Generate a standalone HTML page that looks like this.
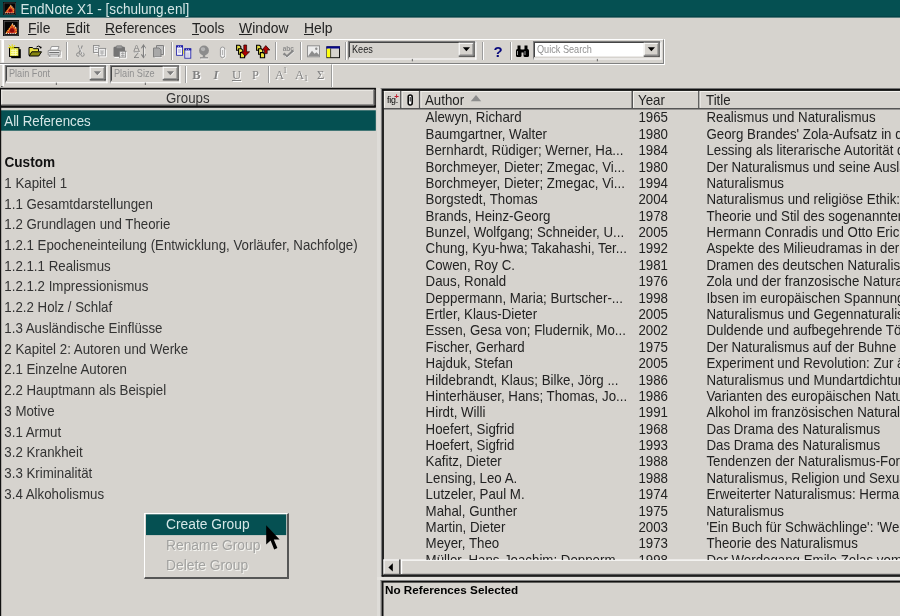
<!DOCTYPE html>
<html><head><meta charset="utf-8"><title>EndNote X1 - [schulung.enl]</title>
<style>
html,body{margin:0;padding:0}
body{width:900px;height:616px;overflow:hidden;background:#d6d3ce;font-family:"Liberation Sans",sans-serif;color:#222;position:relative;font-size:13.3px}
.a{position:absolute;white-space:pre;line-height:1;filter:blur(0.35px)}
.box{position:absolute;box-sizing:border-box}
u{text-decoration:underline;text-underline-offset:1px}
.g{left:4.3px;font-size:13.3px;color:#333}
.s{transform:scaleY(1.065);transform-origin:0 85%}
.r{font-size:13.3px;color:#222}
</style></head><body>

<div class="box" style="left:0;top:0;width:900px;height:17px;background:#055052"></div>
<svg class="box" style="left:0;top:16px" width="900" height="2"><rect x="0" y="0" width="900" height="1.6" fill="#044448"/></svg>
<div class="a s" style="left:20.5px;top:3px;font-size:13.55px;color:#d4e6e6">EndNote X1 - [schulung.enl]</div>
<svg class="box" style="left:2.7px;top:2px" width="13.3" height="13.3" viewBox="0 0 16 16"><rect width="16" height="16" fill="#050505"/><rect x="1.2" y="1.2" width="13.6" height="13.6" fill="none" stroke="#5a5a5a" stroke-width="0.8"/><path d="M2.2 13.2 L9 3.6 L13.6 8.6 L13.6 13.2 Z" fill="#d43a20"/><path d="M3.4 12.6 L9 5 L12.8 9 L12.8 12.6" fill="none" stroke="#f4c830" stroke-width="1.3" stroke-dasharray="1.1 1.1"/><path d="M2.6 13.2 H13.4" stroke="#f0e8e0" stroke-width="1" stroke-dasharray="1.2 1"/><path d="M9 3.4 L13.6 8.4" stroke="#f8e8d8" stroke-width="1" stroke-dasharray="1.3 0.9"/><circle cx="8.8" cy="10.2" r="2.1" fill="#8a0808"/></svg>
<svg class="box" style="left:2.7px;top:19.8px" width="16.4" height="16.4" viewBox="0 0 16 16"><rect width="16" height="16" fill="#050505"/><rect x="1.2" y="1.2" width="13.6" height="13.6" fill="none" stroke="#5a5a5a" stroke-width="0.8"/><path d="M2.2 13.2 L9 3.6 L13.6 8.6 L13.6 13.2 Z" fill="#d43a20"/><path d="M3.4 12.6 L9 5 L12.8 9 L12.8 12.6" fill="none" stroke="#f4c830" stroke-width="1.3" stroke-dasharray="1.1 1.1"/><path d="M2.6 13.2 H13.4" stroke="#f0e8e0" stroke-width="1" stroke-dasharray="1.2 1"/><path d="M9 3.4 L13.6 8.4" stroke="#f8e8d8" stroke-width="1" stroke-dasharray="1.3 0.9"/><circle cx="8.8" cy="10.2" r="2.1" fill="#8a0808"/></svg>
<div class="a" style="left:28px;top:22px;font-size:13.9px;color:#222"><u>F</u>ile</div>
<div class="a" style="left:66px;top:22px;font-size:13.9px;color:#222"><u>E</u>dit</div>
<div class="a" style="left:105px;top:22px;font-size:13.9px;color:#222"><u>R</u>eferences</div>
<div class="a" style="left:192px;top:22px;font-size:13.9px;color:#222"><u>T</u>ools</div>
<div class="a" style="left:239px;top:22px;font-size:13.9px;color:#222"><u>W</u>indow</div>
<div class="a" style="left:304px;top:22px;font-size:13.9px;color:#222"><u>H</u>elp</div>
<svg class="box" style="left:0;top:109px" width="378" height="24"><rect x="1" y="1.3" width="374.8" height="20.4" fill="#055052"/></svg>
<svg class="box" style="left:0;top:0" width="900" height="616" viewBox="0 0 900 616"><rect x="0" y="88" width="1.2" height="528" fill="#111"/><rect x="0" y="87.8" width="375.8" height="1.9" fill="#111"/><rect x="0" y="105.3" width="375.8" height="2.5" fill="#111"/><rect x="374.3" y="88" width="1.5" height="19" fill="#111"/><rect x="1.2" y="89.7" width="373" height="1" fill="#f0eeea"/><rect x="1.2" y="104.3" width="373" height="1" fill="#777"/><rect x="373.2" y="89.7" width="1.1" height="15" fill="#777"/><rect x="1.2" y="89.7" width="1" height="14.6" fill="#f0eeea"/><rect x="377" y="88" width="3" height="528" fill="#dedcd8"/><rect x="381" y="88" width="1.1" height="488.5" fill="#808080"/><rect x="382.1" y="89" width="1.8" height="487.5" fill="#111"/><rect x="380.6" y="88" width="520" height="1" fill="#808080"/><rect x="382.1" y="88.9" width="520" height="2" fill="#111"/><rect x="381.7" y="575" width="520" height="1.8" fill="#111"/><rect x="383.9" y="91" width="517" height="1" fill="#f4f2ee"/><rect x="383.9" y="108" width="517" height="1.5" fill="#555"/><rect x="383.9" y="91" width="1" height="16.8" fill="#f4f2ee"/><rect x="400.1" y="91" width="1.5" height="17.5" fill="#555"/><rect x="401.6" y="91" width="1" height="16.8" fill="#f4f2ee"/><rect x="418.9" y="91" width="1.5" height="17.5" fill="#555"/><rect x="420.4" y="91" width="1" height="16.8" fill="#f4f2ee"/><rect x="631.5" y="91" width="1.5" height="17.5" fill="#555"/><rect x="633" y="91" width="1" height="16.8" fill="#f4f2ee"/><rect x="698.1" y="91" width="1.5" height="17.5" fill="#555"/><rect x="699.6" y="91" width="1" height="16.8" fill="#f4f2ee"/><rect x="903.5" y="91" width="1.5" height="17.5" fill="#555"/><rect x="383.5" y="559.5" width="517" height="15.5" fill="#d6d3ce"/><rect x="383.5" y="559.5" width="16" height="1" fill="#fff"/><rect x="383.5" y="559.5" width="1" height="15" fill="#fff"/><rect x="399" y="559.5" width="1.5" height="15.5" fill="#555"/><rect x="383.5" y="573.8" width="517" height="1.4" fill="#555"/><rect x="401" y="559.5" width="500" height="1.2" fill="#fff"/><rect x="401" y="559.5" width="1.2" height="14.5" fill="#fff"/><path d="M392.8 563.2V571.6L388.4 567.4Z" fill="#000"/><rect x="377" y="577" width="524" height="3" fill="#e4e2de"/><rect x="380.6" y="580" width="520" height="1" fill="#808080"/><rect x="380.6" y="580" width="1.1" height="40" fill="#808080"/><rect x="381.7" y="581" width="520" height="1.6" fill="#111"/><rect x="381.7" y="581" width="1.8" height="40" fill="#111"/><path d="M470.8 101.2L476 95L481.2 101.2Z" fill="#8c8c8c"/><rect x="408.2" y="95" width="4" height="10" rx="2" fill="#fff" stroke="#0a0a0a" stroke-width="1.6"/><path d="M410.2 97V101.5" stroke="#111" stroke-width="1"/></svg>
<div class="a s" style="left:166px;top:91.5px;font-size:13.3px;color:#333">Groups</div>
<div class="a s" style="left:4.3px;top:114.5px;font-size:13.3px;color:#d4e6e6">All References</div>
<div class="a s" style="left:4.5px;top:156px;font-size:13.6px;font-weight:bold;color:#111">Custom</div>
<div class="a g s" style="top:176.80px">1 Kapitel 1</div>
<div class="a g s" style="top:197.53px">1.1 Gesamtdarstellungen</div>
<div class="a g s" style="top:218.26px">1.2 Grundlagen und Theorie</div>
<div class="a g s" style="top:238.99px">1.2.1 Epocheneinteilung (Entwicklung, Vorläufer, Nachfolge)</div>
<div class="a g s" style="top:259.72px">1.2.1.1 Realismus</div>
<div class="a g s" style="top:280.45px">1.2.1.2 Impressionismus</div>
<div class="a g s" style="top:301.18px">1.2.2 Holz / Schlaf</div>
<div class="a g s" style="top:321.91px">1.3 Ausländische Einflüsse</div>
<div class="a g s" style="top:342.64px">2 Kapitel 2: Autoren und Werke</div>
<div class="a g s" style="top:363.37px">2.1 Einzelne Autoren</div>
<div class="a g s" style="top:384.10px">2.2 Hauptmann als Beispiel</div>
<div class="a g s" style="top:404.83px">3 Motive</div>
<div class="a g s" style="top:425.56px">3.1 Armut</div>
<div class="a g s" style="top:446.29px">3.2 Krankheit</div>
<div class="a g s" style="top:467.02px">3.3 Kriminalität</div>
<div class="a g s" style="top:487.75px">3.4 Alkoholismus</div>
<div class="a r s" style="left:425px;top:93.5px">Author</div>
<div class="a r s" style="left:638px;top:93.5px">Year</div>
<div class="a r s" style="left:706px;top:93.5px">Title</div>
<div class="a" style="left:387px;top:96px;font-size:8.8px;color:#000;letter-spacing:-0.2px;filter:blur(0.2px)">fig.</div>
<div class="a" style="left:394.3px;top:93px;font-size:8px;color:#c02030;font-weight:bold">+</div>
<div class="box" style="left:384px;top:109px;width:516px;height:450.5px;overflow:hidden">
<div class="a r s" style="left:41.6px;top:2.40px">Alewyn, Richard</div><div class="a r s" style="left:254.4px;top:2.40px">1965</div><div class="a r s" style="left:322.4px;top:2.40px">Realismus und Naturalismus</div>
<div class="a r s" style="left:41.6px;top:18.78px">Baumgartner, Walter</div><div class="a r s" style="left:254.4px;top:18.78px">1980</div><div class="a r s" style="left:322.4px;top:18.78px">Georg Brandes' Zola-Aufsatz in der Deutschen Rundschau</div>
<div class="a r s" style="left:41.6px;top:35.17px">Bernhardt, Rüdiger; Werner, Ha...</div><div class="a r s" style="left:254.4px;top:35.17px">1984</div><div class="a r s" style="left:322.4px;top:35.17px">Lessing als literarische Autorität der Naturalisten</div>
<div class="a r s" style="left:41.6px;top:51.56px">Borchmeyer, Dieter; Zmegac, Vi...</div><div class="a r s" style="left:254.4px;top:51.56px">1980</div><div class="a r s" style="left:322.4px;top:51.56px">Der Naturalismus und seine Ausläufer</div>
<div class="a r s" style="left:41.6px;top:67.94px">Borchmeyer, Dieter; Zmegac, Vi...</div><div class="a r s" style="left:254.4px;top:67.94px">1994</div><div class="a r s" style="left:322.4px;top:67.94px">Naturalismus</div>
<div class="a r s" style="left:41.6px;top:84.33px">Borgstedt, Thomas</div><div class="a r s" style="left:254.4px;top:84.33px">2004</div><div class="a r s" style="left:322.4px;top:84.33px">Naturalismus und religiöse Ethik: Gerhart Hauptmann</div>
<div class="a r s" style="left:41.6px;top:100.71px">Brands, Heinz-Georg</div><div class="a r s" style="left:254.4px;top:100.71px">1978</div><div class="a r s" style="left:322.4px;top:100.71px">Theorie und Stil des sogenannten Konsequenten Naturalismus</div>
<div class="a r s" style="left:41.6px;top:117.10px">Bunzel, Wolfgang; Schneider, U...</div><div class="a r s" style="left:254.4px;top:117.10px">2005</div><div class="a r s" style="left:322.4px;top:117.10px">Hermann Conradis und Otto Erich Hartlebens Beziehung</div>
<div class="a r s" style="left:41.6px;top:133.48px">Chung, Kyu-hwa; Takahashi, Ter...</div><div class="a r s" style="left:254.4px;top:133.48px">1992</div><div class="a r s" style="left:322.4px;top:133.48px">Aspekte des Milieudramas in der deutschen Literatur</div>
<div class="a r s" style="left:41.6px;top:149.87px">Cowen, Roy C.</div><div class="a r s" style="left:254.4px;top:149.87px">1981</div><div class="a r s" style="left:322.4px;top:149.87px">Dramen des deutschen Naturalismus</div>
<div class="a r s" style="left:41.6px;top:166.25px">Daus, Ronald</div><div class="a r s" style="left:254.4px;top:166.25px">1976</div><div class="a r s" style="left:322.4px;top:166.25px">Zola und der franzosische Naturalismus</div>
<div class="a r s" style="left:41.6px;top:182.63px">Deppermann, Maria; Burtscher-...</div><div class="a r s" style="left:254.4px;top:182.63px">1998</div><div class="a r s" style="left:322.4px;top:182.63px">Ibsen im europäischen Spannungsfeld zwischen Naturalismus</div>
<div class="a r s" style="left:41.6px;top:199.02px">Ertler, Klaus-Dieter</div><div class="a r s" style="left:254.4px;top:199.02px">2005</div><div class="a r s" style="left:322.4px;top:199.02px">Naturalismus und Gegennaturalismus in Frankreich</div>
<div class="a r s" style="left:41.6px;top:215.41px">Essen, Gesa von; Fludernik, Mo...</div><div class="a r s" style="left:254.4px;top:215.41px">2002</div><div class="a r s" style="left:322.4px;top:215.41px">Duldende und aufbegehrende Töchter im Naturalismus</div>
<div class="a r s" style="left:41.6px;top:231.79px">Fischer, Gerhard</div><div class="a r s" style="left:254.4px;top:231.79px">1975</div><div class="a r s" style="left:322.4px;top:231.79px">Der Naturalismus auf der Buhne</div>
<div class="a r s" style="left:41.6px;top:248.18px">Hajduk, Stefan</div><div class="a r s" style="left:254.4px;top:248.18px">2005</div><div class="a r s" style="left:322.4px;top:248.18px">Experiment und Revolution: Zur ästhetischen Theorie</div>
<div class="a r s" style="left:41.6px;top:264.56px">Hildebrandt, Klaus; Bilke, Jörg ...</div><div class="a r s" style="left:254.4px;top:264.56px">1986</div><div class="a r s" style="left:322.4px;top:264.56px">Naturalismus und Mundartdichtung in Schlesien</div>
<div class="a r s" style="left:41.6px;top:280.95px">Hinterhäuser, Hans; Thomas, Jo...</div><div class="a r s" style="left:254.4px;top:280.95px">1986</div><div class="a r s" style="left:322.4px;top:280.95px">Varianten des europäischen Naturalismus</div>
<div class="a r s" style="left:41.6px;top:297.33px">Hirdt, Willi</div><div class="a r s" style="left:254.4px;top:297.33px">1991</div><div class="a r s" style="left:322.4px;top:297.33px">Alkohol im französischen Naturalismus</div>
<div class="a r s" style="left:41.6px;top:313.72px">Hoefert, Sigfrid</div><div class="a r s" style="left:254.4px;top:313.72px">1968</div><div class="a r s" style="left:322.4px;top:313.72px">Das Drama des Naturalismus</div>
<div class="a r s" style="left:41.6px;top:330.10px">Hoefert, Sigfrid</div><div class="a r s" style="left:254.4px;top:330.10px">1993</div><div class="a r s" style="left:322.4px;top:330.10px">Das Drama des Naturalismus</div>
<div class="a r s" style="left:41.6px;top:346.49px">Kafitz, Dieter</div><div class="a r s" style="left:254.4px;top:346.49px">1988</div><div class="a r s" style="left:322.4px;top:346.49px">Tendenzen der Naturalismus-Forschung</div>
<div class="a r s" style="left:41.6px;top:362.87px">Lensing, Leo A.</div><div class="a r s" style="left:254.4px;top:362.87px">1988</div><div class="a r s" style="left:322.4px;top:362.87px">Naturalismus, Religion und Sexualität</div>
<div class="a r s" style="left:41.6px;top:379.25px">Lutzeler, Paul M.</div><div class="a r s" style="left:254.4px;top:379.25px">1974</div><div class="a r s" style="left:322.4px;top:379.25px">Erweiterter Naturalismus: Hermann Broch</div>
<div class="a r s" style="left:41.6px;top:395.64px">Mahal, Gunther</div><div class="a r s" style="left:254.4px;top:395.64px">1975</div><div class="a r s" style="left:322.4px;top:395.64px">Naturalismus</div>
<div class="a r s" style="left:41.6px;top:412.03px">Martin, Dieter</div><div class="a r s" style="left:254.4px;top:412.03px">2003</div><div class="a r s" style="left:322.4px;top:412.03px">'Ein Buch für Schwächlinge': 'Werther'-Allusionen</div>
<div class="a r s" style="left:41.6px;top:428.41px">Meyer, Theo</div><div class="a r s" style="left:254.4px;top:428.41px">1973</div><div class="a r s" style="left:322.4px;top:428.41px">Theorie des Naturalismus</div>
<div class="a r s" style="left:41.6px;top:444.80px">Müller, Hans-Joachim; Depperm...</div><div class="a r s" style="left:254.4px;top:444.80px">1998</div><div class="a r s" style="left:322.4px;top:444.80px">Der Werdegang Emile Zolas vom Romantiker</div>
</div>
<div class="a" style="left:385px;top:583.5px;font-size:11.7px;font-weight:bold;color:#000">No References Selected</div>
<div class="box" style="left:144px;top:512.5px;width:144.8px;height:66.5px;background:#d6d3ce;border-top:1px solid #fff;border-left:1px solid #fff;border-right:2px solid #565656;border-bottom:2px solid #565656"></div>
<svg class="box" style="left:144px;top:512px" width="146" height="24"><rect x="2" y="2.4" width="140.2" height="20.7" fill="#055052"/></svg>
<div class="a" style="left:166px;top:518px;font-size:13.8px;color:#d4e6e6">Create Group</div>
<div class="a" style="left:166px;top:539px;font-size:13.8px;color:#a2a2a0;text-shadow:1px 1px 0 #f4f4f0">Rename Group</div>
<div class="a" style="left:166px;top:559px;font-size:13.8px;color:#a2a2a0;text-shadow:1px 1px 0 #f4f4f0">Delete Group</div>
<svg class="box" style="left:265px;top:525px" width="16" height="26" viewBox="0 0 16 26"><path d="M1.2 0.3 L1.2 19.5 L5.6 15.4 L9.2 24.4 L12.4 23 L8.8 14.4 L14.6 14.4 Z" fill="#000"/></svg>
<div class="box" style="left:0;top:39px;width:664px;height:25px;border-top:1px solid #fff;border-bottom:1px solid #808080;border-right:1px solid #808080"></div>
<svg class="box" style="left:0;top:40px" width="5" height="46"><rect x="1.4" y="0" width="2.6" height="22.5" fill="#fff"/><rect x="2.4" y="24.6" width="1.6" height="21.5" fill="#fff"/></svg>
<svg class="box" style="left:0;top:39px" width="670" height="50"><rect x="0" y="25" width="665" height="1" fill="#fff"/><rect x="664" y="0" width="1" height="26" fill="#fff"/><rect x="331" y="25.5" width="0.9" height="22.5" fill="#8a8a8a"/><rect x="331.9" y="25.5" width="1.1" height="22.5" fill="#fff"/><rect x="1" y="47" width="1.6" height="1" fill="#555"/></svg>
<div class="box" style="left:66px;top:42px;width:1px;height:18px;background:#9c9c9c"></div><div class="box" style="left:67px;top:42px;width:1px;height:18px;background:#fff"></div>
<div class="box" style="left:171px;top:42px;width:1px;height:18px;background:#9c9c9c"></div><div class="box" style="left:172px;top:42px;width:1px;height:18px;background:#fff"></div>
<div class="box" style="left:275px;top:42px;width:1px;height:18px;background:#9c9c9c"></div><div class="box" style="left:276px;top:42px;width:1px;height:18px;background:#fff"></div>
<div class="box" style="left:300px;top:42px;width:1px;height:18px;background:#9c9c9c"></div><div class="box" style="left:301px;top:42px;width:1px;height:18px;background:#fff"></div>
<div class="box" style="left:345px;top:42px;width:1px;height:18px;background:#9c9c9c"></div><div class="box" style="left:346px;top:42px;width:1px;height:18px;background:#fff"></div>
<div class="box" style="left:482px;top:42px;width:1px;height:18px;background:#9c9c9c"></div><div class="box" style="left:483px;top:42px;width:1px;height:18px;background:#fff"></div>
<div class="box" style="left:510px;top:42px;width:1px;height:18px;background:#9c9c9c"></div><div class="box" style="left:511px;top:42px;width:1px;height:18px;background:#fff"></div>
<div class="box" style="left:185px;top:66px;width:1px;height:17px;background:#9c9c9c"></div><div class="box" style="left:186px;top:66px;width:1px;height:17px;background:#fff"></div>
<div class="box" style="left:268px;top:66px;width:1px;height:17px;background:#9c9c9c"></div><div class="box" style="left:269px;top:66px;width:1px;height:17px;background:#fff"></div>
<svg class="box" style="left:8px;top:44px" width="14" height="15" viewBox="0 0 14 15"><rect x="3.2" y="5.2" width="9.6" height="9" fill="#000"/><rect x="1.5" y="3.6" width="9.4" height="8.8" fill="#ecec50" stroke="#000" stroke-width="1"/><path d="M3 6.5H9.5M3 8.5H9.5M3 10.5H9.5M5 5V11.5M7.5 5V11.5" stroke="#fafac0" stroke-width="0.8"/><path d="M0.8 1L4.5 4.5M4.2 0.3V4M6.8 1.2L5 4M0.3 3.6H4" stroke="#e8e000" stroke-width="1"/></svg>
<svg class="box" style="left:28px;top:45px" width="15" height="12" viewBox="0 0 15 12"><path d="M1 10.5V2.5H4.5L5.5 3.7H10.5V6.2" fill="#e8e040" stroke="#000"/><path d="M1.2 11L3.8 6.8H13.5L10.8 11Z" fill="#848410" stroke="#000"/><path d="M8.5 2Q10.2 0.3 12 1.6" stroke="#000" fill="none" stroke-width="1"/><circle cx="12.6" cy="2.6" r="1" fill="#000"/></svg>
<svg class="box" style="left:47px;top:45px" width="15" height="13" viewBox="0 0 15 13"><path d="M4.5 1.5H12L10.8 5H3Z" fill="#fafafa" stroke="#909090" stroke-width="0.9"/><path d="M1.2 5.5H13.2V10H1.2Z" fill="#ececec" stroke="#909090" stroke-width="0.9"/><path d="M2.2 7.6H12.2" stroke="#707070" stroke-width="1.2"/><path d="M2.8 10H11.6V12H2.8Z" fill="#fff" stroke="#909090" stroke-width="0.9"/><path d="M2 12.8H14.3M14.3 6.5V12.8" stroke="#fff"/></svg>
<svg class="box" style="left:75.5px;top:45px" width="9" height="13" viewBox="0 0 9 13"><path d="M2.2 0.5L5.8 8M6.4 0.5L2.8 8" stroke="#8c8c8c" stroke-width="1.1" fill="none"/><circle cx="2.2" cy="9.6" r="1.7" fill="none" stroke="#8c8c8c" stroke-width="1"/><circle cx="6.5" cy="9.6" r="1.7" fill="none" stroke="#8c8c8c" stroke-width="1"/><path d="M3.2 1.3L6.9 9M3.2 11.2Q4 11 4.2 10" stroke="#fff" stroke-width="0.7" fill="none"/></svg>
<svg class="box" style="left:93px;top:45px" width="15" height="13" viewBox="0 0 15 13"><rect x="0.5" y="0.5" width="5.5" height="7" fill="#ececec" stroke="#8c8c8c" stroke-width="0.9"/><path d="M6.5 2.2V8.5H1.5" stroke="#fff" fill="none" stroke-width="0.8"/><rect x="5.6" y="3.4" width="7" height="7.6" fill="#ececec" stroke="#8c8c8c" stroke-width="0.9"/><path d="M1.8 2.5H4.8M1.8 4.5H4M7 6H11.2M7 8H11.2M9 6V10.5" stroke="#9a9a9a" stroke-width="0.7"/><path d="M13.4 4.5V11.9H6.5" stroke="#fff" fill="none" stroke-width="0.9"/></svg>
<svg class="box" style="left:113px;top:45px" width="15" height="14" viewBox="0 0 15 14"><rect x="0.5" y="1.8" width="11.5" height="10" rx="1.2" fill="#747474"/><rect x="3.2" y="0.8" width="6" height="2.6" rx="0.8" fill="#9c9c9c" stroke="#747474" stroke-width="0.7"/><rect x="6.4" y="6.2" width="6.4" height="6" fill="#e4e4e4" stroke="#808080" stroke-width="0.9"/><path d="M8 8.5H11.5M8 10.5H11.5M9.8 7V12" stroke="#9a9a9a" stroke-width="0.7"/><path d="M13.6 7V13.2H7M1.5 12.5H6" stroke="#fff" fill="none" stroke-width="0.9"/></svg>
<svg class="box" style="left:133px;top:44px" width="15" height="15" viewBox="0 0 15 15"><g style="filter:blur(0.3px)"><text x="0.6" y="7.2" font-family="Liberation Sans,sans-serif" font-size="9" fill="#7c7c7c">A</text><text x="0.8" y="14.4" font-family="Liberation Sans,sans-serif" font-size="9" fill="#7c7c7c">Z</text></g><path d="M0.5 7.6H7" stroke="#8c8c8c" stroke-width="0.8"/><path d="M10.5 1V13.6M8.4 4.2L10.5 1L12.6 4.2M8.4 10.4L10.5 13.6L12.6 10.4" stroke="#808080" stroke-width="1.1" fill="none"/><path d="M11.6 3V12.5M1.5 8.6H7" stroke="#fff" stroke-width="0.6"/></svg>
<svg class="box" style="left:153px;top:45px" width="13" height="13" viewBox="0 0 13 13"><path d="M3.5 0.5H10.5V9.5H3.5Z" fill="#c0c0c0" stroke="#808080"/><path d="M0.5 3H6L8 5V12H0.5Z" fill="#a8a8a8" stroke="#808080"/><path d="M11.5 1.5V10.5M8.8 12.8H1.5" stroke="#fff"/></svg>
<svg class="box" style="left:176px;top:45px" width="16" height="14" viewBox="0 0 16 14"><rect x="0.6" y="0.9" width="6" height="9.4" fill="#f6f6fc" stroke="#2020a8" stroke-width="0.85"/><rect x="0.2" y="0.4" width="6.8" height="2" fill="#2020a8"/><path d="M2 5H5.2M2 7H5.2" stroke="#8080c0" stroke-width="0.7"/><rect x="7" y="4.6" width="1.2" height="4.4" fill="#e8e040"/><rect x="8.8" y="3.8" width="6" height="9.4" fill="#e8e8f6" stroke="#2020a8" stroke-width="0.85"/><rect x="8.4" y="3.4" width="6.8" height="2" fill="#2020a8"/><path d="M10 4.4H13.5" stroke="#fff" stroke-width="0.6" stroke-dasharray="1 1"/><path d="M2 1.4H5.5" stroke="#fff" stroke-width="0.6" stroke-dasharray="1 1"/><rect x="10.2" y="7.5" width="3.2" height="4.5" fill="#d0d0e8"/></svg>
<svg class="box" style="left:198px;top:44.6px" width="12" height="15" viewBox="0 0 12 15"><circle cx="6" cy="5.5" r="4.9" fill="#8c8c8c"/><path d="M3 3Q5 1.5 7 3Q8 5 6 6Q4 6.5 3 5Z" fill="#b4b4b4"/><path d="M6 10V12.2" stroke="#8c8c8c" stroke-width="2.4"/><path d="M2 12.9H10" stroke="#8c8c8c" stroke-width="1.5"/><path d="M2.5 14H10.5" stroke="#fff" stroke-width="0.8"/></svg>
<svg class="box" style="left:219px;top:45.5px" width="9" height="14" viewBox="0 0 9 14"><rect x="1.4" y="1" width="4.4" height="10.6" rx="2.2" fill="#f0f0f0" stroke="#9a9a9a" stroke-width="1"/><path d="M3.6 4V9" stroke="#a8a8a8" stroke-width="0.9"/><path d="M6.6 3.5V10Q6.6 12.4 4.2 12.6" fill="none" stroke="#fff" stroke-width="0.8"/></svg>
<svg class="box" style="left:236px;top:44px" width="15" height="15" viewBox="0 0 15 15"><path d="M0.6 1.2H3.4L4.8 2.6V6.2H0.6Z" fill="#e8e040" stroke="#000" stroke-width="1.1"/><path d="M2.6 4.8H5.4L6.8 6.2V10.2H2.6Z" fill="#f0e850" stroke="#000" stroke-width="1.1"/><path d="M4.4 8.6H7.2L8.6 10V13.8H4.4Z" fill="#e8e040" stroke="#000" stroke-width="1.1"/><path d="M7.8 1H10.6V7.8H13.6L9.2 12.2L5.4 7.8H7.8Z" fill="#b00000" stroke="#200000" stroke-width="0.7"/></svg>
<svg class="box" style="left:256px;top:44px" width="15" height="15" viewBox="0 0 15 15"><path d="M0.6 1.2H3.4L4.8 2.6V6.2H0.6Z" fill="#e8e040" stroke="#000" stroke-width="1.1"/><path d="M2.6 4.8H5.4L6.8 6.2V10.2H2.6Z" fill="#f0e850" stroke="#000" stroke-width="1.1"/><path d="M4.4 8.6H7.2L8.6 10V13.8H4.4Z" fill="#e8e040" stroke="#000" stroke-width="1.1"/><path d="M8.4 9.6H11.2V6H13.8L9.8 1.6L6 6H8.4Z" fill="#b00000" stroke="#200000" stroke-width="0.7"/></svg>
<svg class="box" style="left:282px;top:45px" width="14" height="14" viewBox="0 0 14 14"><g style="filter:blur(0.3px)"><text x="0.8" y="5.6" font-family="Liberation Sans,sans-serif" font-size="6.6" font-weight="bold" fill="#8e8e8e" textLength="11">abc</text></g><path d="M1.6 8.4L4.8 11.6L11.4 5.6" stroke="#868686" stroke-width="2.3" fill="none"/><path d="M2.6 10.4L4.8 13L12.3 6.6" stroke="#fff" stroke-width="0.7" fill="none"/></svg>
<svg class="box" style="left:307px;top:45px" width="14" height="13" viewBox="0 0 14 13"><rect x="0.5" y="0.8" width="12" height="11" fill="#ececec" stroke="#909090"/><path d="M1 11.3L5 5.8L7.5 8.8L9.5 7.3L12 9.8V11.3Z" fill="#8c8c8c"/><circle cx="9.3" cy="3.8" r="1.2" fill="#8c8c8c"/></svg>
<svg class="box" style="left:326px;top:45.6px" width="15" height="13" viewBox="0 0 15 13"><rect x="0.9" y="0.9" width="12.6" height="10.8" fill="#d6d3ce" stroke="#000" stroke-width="0.9"/><rect x="0.4" y="0.3" width="13.6" height="2.2" fill="#080888"/><rect x="0.9" y="2.8" width="3.4" height="8.4" fill="#ffff10"/><path d="M4.6 2.5V11.5" stroke="#000" stroke-width="0.7"/></svg>
<svg class="box" style="left:348px;top:41px;overflow:visible" width="128.5" height="21.5"><rect x="0" y="0" width="128.5" height="1" fill="#7c7c7c"/><rect x="0" y="0" width="1" height="18.5" fill="#7c7c7c"/><rect x="1" y="1" width="126.5" height="1" fill="#454545"/><rect x="1" y="1" width="1" height="15.0" fill="#454545"/><rect x="127.3" y="0" width="1.2" height="18.5" fill="#fff"/><rect x="0.5" y="17.5" width="128.0" height="1" fill="#fff"/><rect x="110.7" y="1.8" width="16" height="14.0" fill="#d6d3ce"/><rect x="110.7" y="1.8" width="16" height="1" fill="#fff"/><rect x="110.7" y="1.8" width="1" height="14.0" fill="#fff"/><rect x="125.4" y="1.8" width="1.3" height="14.0" fill="#454545"/><rect x="110.7" y="14.5" width="16" height="1.3" fill="#454545"/><rect x="124.4" y="2.8" width="1" height="12.0" fill="#8a8a8a"/><rect x="111.7" y="13.5" width="14" height="1" fill="#8a8a8a"/><path d="M114.80000000000001 6.3H122.0L118.4 10.3Z" fill="#000"/><rect x="63.85" y="17.9" width="0.9" height="2.4" fill="#5a5a5a"/></svg><div class="a" style="left:352px;top:44.2px;font-size:10.5px;color:#222;transform:scaleX(0.87);transform-origin:0 0">Kees</div>
<svg class="box" style="left:533px;top:41px;overflow:visible" width="128.5" height="21.5"><rect x="0" y="0" width="128.5" height="1" fill="#7c7c7c"/><rect x="0" y="0" width="1" height="18.5" fill="#7c7c7c"/><rect x="1" y="1" width="126.5" height="1" fill="#454545"/><rect x="1" y="1" width="1" height="15.0" fill="#454545"/><rect x="127.3" y="0" width="1.2" height="18.5" fill="#fff"/><rect x="0.5" y="17.5" width="128.0" height="1" fill="#fff"/><rect x="2" y="2" width="125.0" height="13.5" fill="#fff"/><rect x="110.7" y="1.8" width="16" height="14.0" fill="#d6d3ce"/><rect x="110.7" y="1.8" width="16" height="1" fill="#fff"/><rect x="110.7" y="1.8" width="1" height="14.0" fill="#fff"/><rect x="125.4" y="1.8" width="1.3" height="14.0" fill="#454545"/><rect x="110.7" y="14.5" width="16" height="1.3" fill="#454545"/><rect x="124.4" y="2.8" width="1" height="12.0" fill="#8a8a8a"/><rect x="111.7" y="13.5" width="14" height="1" fill="#8a8a8a"/><path d="M114.80000000000001 6.3H122.0L118.4 10.3Z" fill="#000"/><rect x="63.85" y="17.9" width="0.9" height="2.4" fill="#5a5a5a"/></svg><div class="a" style="left:537px;top:44.2px;font-size:10.5px;color:#909090;transform:scaleX(0.87);transform-origin:0 0">Quick Search</div>
<svg class="box" style="left:5px;top:65px;overflow:visible" width="102.5" height="21.2"><rect x="0" y="0" width="102.5" height="1" fill="#7c7c7c"/><rect x="0" y="0" width="1" height="18.2" fill="#7c7c7c"/><rect x="1" y="1" width="100.5" height="1" fill="#454545"/><rect x="1" y="1" width="1" height="14.7" fill="#454545"/><rect x="101.3" y="0" width="1.2" height="18.2" fill="#fff"/><rect x="0.5" y="17.2" width="102.0" height="1" fill="#fff"/><rect x="84.7" y="1.8" width="16" height="13.7" fill="#d6d3ce"/><rect x="84.7" y="1.8" width="16" height="1" fill="#fff"/><rect x="84.7" y="1.8" width="1" height="13.7" fill="#fff"/><rect x="99.4" y="1.8" width="1.3" height="13.7" fill="#454545"/><rect x="84.7" y="14.2" width="16" height="1.3" fill="#454545"/><rect x="98.4" y="2.8" width="1" height="11.7" fill="#8a8a8a"/><rect x="85.7" y="13.2" width="14" height="1" fill="#8a8a8a"/><path d="M88.80000000000001 6.1499999999999995H96.0L92.4 10.149999999999999Z" fill="#7c7c7c"/><path d="M96.30000000000001 6.749999999999999L93.0 10.549999999999999" stroke="#fff" stroke-width="0.8"/><rect x="50.85" y="17.599999999999998" width="0.9" height="2.4" fill="#5a5a5a"/></svg><div class="a" style="left:9px;top:68.2px;font-size:10.5px;color:#909090;transform:scaleX(0.87);transform-origin:0 0">Plain Font</div>
<svg class="box" style="left:110px;top:65px;overflow:visible" width="70.5" height="21.2"><rect x="0" y="0" width="70.5" height="1" fill="#7c7c7c"/><rect x="0" y="0" width="1" height="18.2" fill="#7c7c7c"/><rect x="1" y="1" width="68.5" height="1" fill="#454545"/><rect x="1" y="1" width="1" height="14.7" fill="#454545"/><rect x="69.3" y="0" width="1.2" height="18.2" fill="#fff"/><rect x="0.5" y="17.2" width="70.0" height="1" fill="#fff"/><rect x="52.7" y="1.8" width="16" height="13.7" fill="#d6d3ce"/><rect x="52.7" y="1.8" width="16" height="1" fill="#fff"/><rect x="52.7" y="1.8" width="1" height="13.7" fill="#fff"/><rect x="67.4" y="1.8" width="1.3" height="13.7" fill="#454545"/><rect x="52.7" y="14.2" width="16" height="1.3" fill="#454545"/><rect x="66.4" y="2.8" width="1" height="11.7" fill="#8a8a8a"/><rect x="53.7" y="13.2" width="14" height="1" fill="#8a8a8a"/><path d="M56.800000000000004 6.1499999999999995H64.0L60.400000000000006 10.149999999999999Z" fill="#7c7c7c"/><path d="M64.30000000000001 6.749999999999999L61.00000000000001 10.549999999999999" stroke="#fff" stroke-width="0.8"/><rect x="34.85" y="17.599999999999998" width="0.9" height="2.4" fill="#5a5a5a"/></svg><div class="a" style="left:114px;top:68.2px;font-size:10.5px;color:#909090;transform:scaleX(0.87);transform-origin:0 0">Plain Size</div>
<div class="a" style="left:493.5px;top:44.2px;font-size:15px;font-weight:bold;color:#08087c">?</div>
<svg class="box" style="left:515px;top:45px" width="15" height="13" viewBox="0 0 15 13"><rect x="1" y="4" width="5.5" height="8" rx="1.5" fill="#000"/><rect x="8.5" y="4" width="5.5" height="8" rx="1.5" fill="#000"/><rect x="2.5" y="0.5" width="3" height="4" fill="#000"/><rect x="9.5" y="0.5" width="3" height="4" fill="#000"/><rect x="6" y="4.5" width="3" height="3" fill="#000"/><path d="M2.5 6V10M10 6V10" stroke="#c0c0c0" stroke-width="0.8"/></svg>
<div class="a" style="left:192.3px;top:69px;font-family:'Liberation Serif',serif;font-size:12.5px;color:#828282;text-shadow:1px 1px 0 #fff;font-weight:bold">B</div>
<div class="a" style="left:213.5px;top:69px;font-family:'Liberation Serif',serif;font-size:12.5px;color:#828282;text-shadow:1px 1px 0 #fff;font-style:italic;font-weight:bold">I</div>
<div class="a" style="left:232px;top:69px;font-family:'Liberation Serif',serif;font-size:12.5px;color:#828282;text-shadow:1px 1px 0 #fff;"><u>U</u></div>
<div class="a" style="left:252px;top:69px;font-family:'Liberation Serif',serif;font-size:12.5px;color:#828282;text-shadow:1px 1px 0 #fff;">P</div>
<div class="a" style="left:275px;top:69px;font-family:'Liberation Serif',serif;font-size:12.5px;color:#828282;text-shadow:1px 1px 0 #fff;">A</div>
<div class="a" style="left:283px;top:67px;font-family:'Liberation Serif',serif;font-size:8px;color:#828282;text-shadow:1px 1px 0 #fff;">1</div>
<div class="a" style="left:295px;top:69px;font-family:'Liberation Serif',serif;font-size:12.5px;color:#828282;text-shadow:1px 1px 0 #fff;">A</div>
<div class="a" style="left:304px;top:74.5px;font-family:'Liberation Serif',serif;font-size:8px;color:#828282;text-shadow:1px 1px 0 #fff;">1</div>
<div class="a" style="left:317px;top:69px;font-family:'Liberation Serif',serif;font-size:12.5px;color:#828282;text-shadow:1px 1px 0 #fff;">Σ</div>
</body></html>
